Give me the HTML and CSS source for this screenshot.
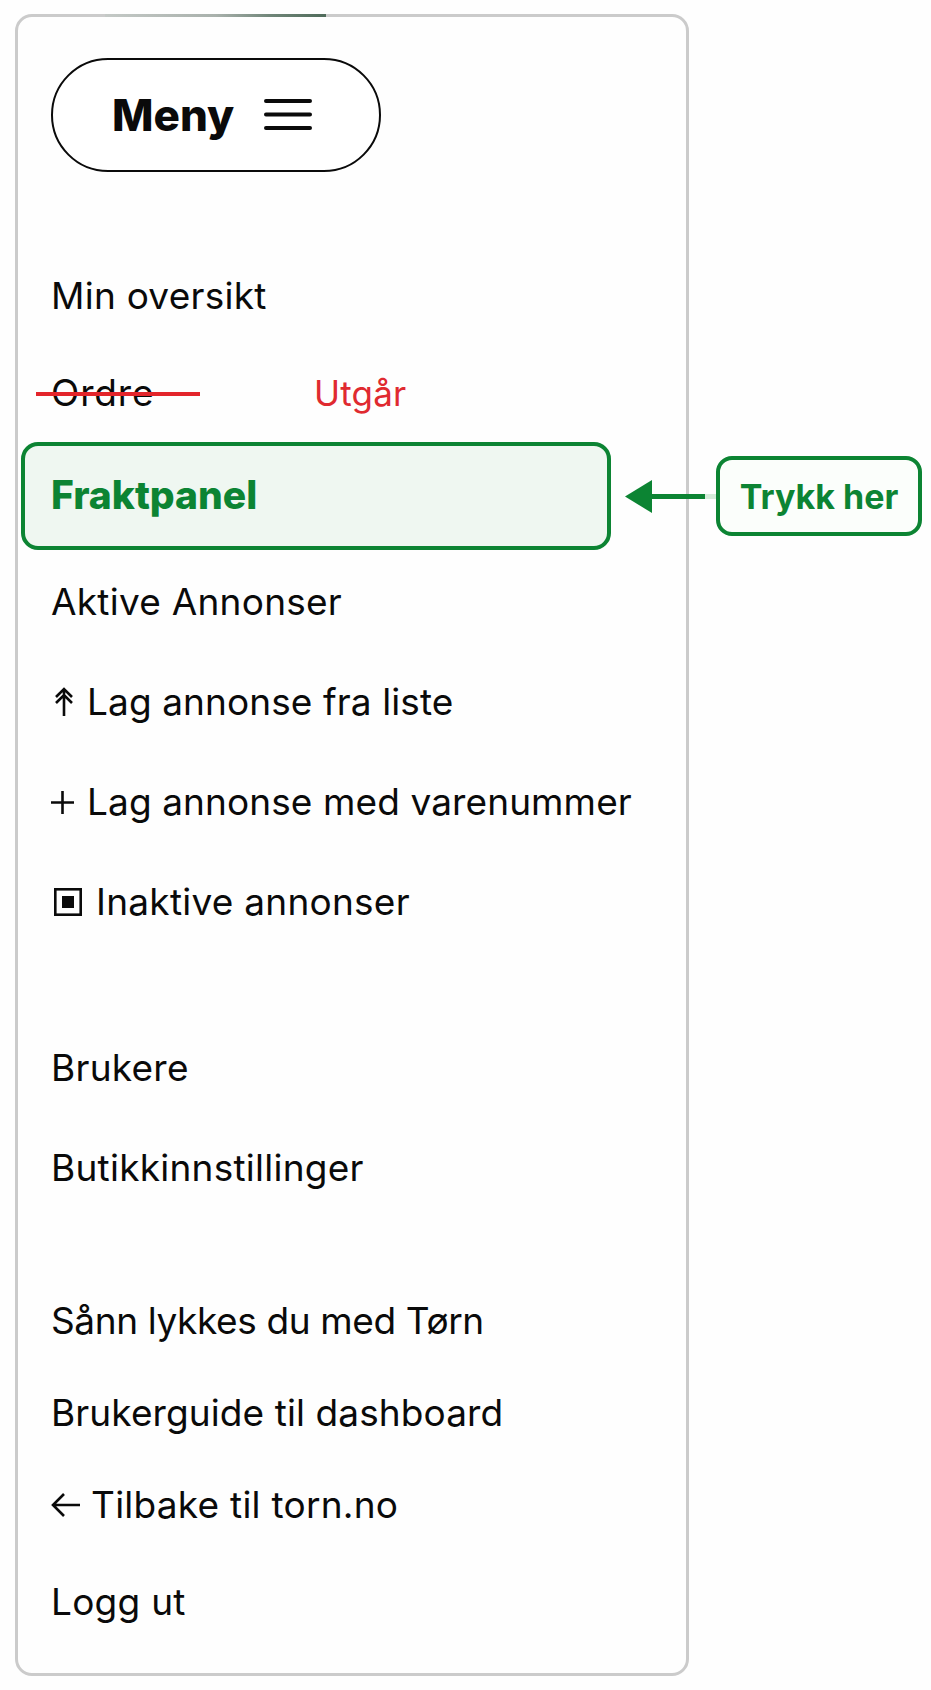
FILE: index.html
```html
<!DOCTYPE html>
<html lang="no">
<head>
<meta charset="utf-8">
<title>Meny</title>
<link rel="stylesheet" href="styles.css">
</head>
<body>
<nav class="card">
  <div class="card-top"></div>
  <button class="pill" type="button">
    <span>Meny</span>
    <svg class="burger" width="48" height="34" viewBox="0 0 48 34"><path d="M2 3h44M2 16.500h44M2 30h44" fill="none" stroke="#0a0a0a" stroke-width="4" stroke-linecap="round"/></svg>
  </button>
  <ul class="menu">
    <li class="row first">Min oversikt</li>
    <li class="row ordre"><span class="struck">Ordre</span><span class="expires">Utgår</span></li>
    <li class="highlight">Fraktpanel
      <svg class="arrow" width="96" height="36" viewBox="0 0 96 36"><path d="M0 17.500 27 1v33z" fill="#0c8433"/><path d="M26 15h54v5H26z" fill="#0c8433"/><path d="M80 15h11v5H80z" fill="#d5ecd9"/></svg>
      <span class="callout">Trykk her</span>
    </li>
    <li class="row after-highlight">Aktive Annonser</li>
    <li class="row with-icon snug"><svg class="ic ic-up" width="20" height="30" viewBox="0 0 20 30"><path d="M10 29V2M2 10l8-8 8 8M2 16l8-8 8 8" fill="none" stroke="#0a0a0a" stroke-width="2.600"/></svg>Lag annonse fra liste</li>
    <li class="row with-icon snug"><svg class="ic ic-plus" width="23" height="23" viewBox="0 0 23 23"><path d="M0 11.500h23M11.500 0v23" fill="none" stroke="#0a0a0a" stroke-width="2.600"/></svg>Lag annonse med varenummer</li>
    <li class="row with-icon"><svg class="ic ic-sq" width="28" height="28" viewBox="0 0 28 28"><rect x="1.300" y="1.300" width="25.400" height="25.400" fill="none" stroke="#0a0a0a" stroke-width="2.600"/><rect x="8" y="8" width="12" height="12" fill="#0a0a0a"/></svg>Inaktive annonser</li>
    <li class="row group-a">Brukere</li>
    <li class="row">Butikkinnstillinger</li>
    <li class="row group-b tighter">Sånn lykkes du med Tørn</li>
    <li class="row tight-a snug">Brukerguide til dashboard</li>
    <li class="row tight-b with-icon"><svg class="ic ic-back" width="29" height="26" viewBox="0 0 29 26"><path d="M29 13H2M13 2 2 13l11 11" fill="none" stroke="#0a0a0a" stroke-width="2.600"/></svg>Tilbake til torn.no</li>
    <li class="row last">Logg ut</li>
  </ul>
</nav>
</body>
</html>
```
FILE: styles.css
```css
* { box-sizing: border-box; }
html, body { margin: 0; padding: 0; }
body {
  width: 931px;
  height: 1690px;
  background: #fefefe;
  color: #0a0a0a;
  font-family: "Inter", "Liberation Sans", sans-serif;
  overflow: hidden;
}
.card {
  position: relative;
  width: 674px;
  height: 1662px;
  margin: 14px 0 0 15px;
  padding: 41px 0 0 33px;
  border: 3px solid #cbcbcb;
  border-radius: 17px;
}
.card-top {
  position: absolute;
  top: -3px;
  left: 87px;
  width: 221px;
  height: 3px;
  background: linear-gradient(90deg, #c4c9c6, #a9b1ac 50%, #6f8578 75%, #4f6b5a);
}
.pill {
  display: flex;
  align-items: center;
  width: 330px;
  height: 114px;
  padding: 0 0 0 59px;
  border: 2.500px solid #0a0a0a;
  border-radius: 57px;
  background: #fff;
  color: #0a0a0a;
  font: 800 44px/1 "Inter", "Liberation Sans", sans-serif;
}
.burger { margin-left: 30px; }
.menu { list-style: none; margin: 0; padding: 0; }
.row {
  display: flex;
  align-items: center;
  height: 60px;
  margin-top: 40px;
  font-size: 37px;
  letter-spacing: .25px;
  line-height: 60px;
  white-space: nowrap;
}
.snug { letter-spacing: .1px; }
.tighter { letter-spacing: -.38px; }
.first { margin-top: 94px; }
.ordre { margin-top: 37px; }
.struck { position: relative; width: 263px; letter-spacing: .85px; }
.struck::after {
  content: "";
  position: absolute;
  left: -15px;
  top: 29px;
  width: 164px;
  height: 4px;
  background: #e3252b;
}
.expires { color: #e02a30; font-size: 35px; letter-spacing: .2px; }
.highlight {
  position: relative;
  width: 590px;
  height: 108px;
  margin: 19px 0 0 -30px;
  padding: 19px 0 0 26px;
  border: 4px solid #0c8433;
  border-radius: 17px;
  background: #eff7f1;
  color: #0c8433;
  font-size: 39px;
  font-weight: 800;
  line-height: 60px;
}
.arrow {
  position: absolute;
  left: 600px;
  top: 33px;
}
.callout {
  position: absolute;
  left: 691px;
  top: 10px;
  width: 206px;
  height: 80px;
  border: 4px solid #0c8433;
  border-radius: 16px;
  background: #fbfefb;
  font-size: 34px;
  font-weight: 700;
  line-height: 73px;
  text-align: center;
}
.after-highlight { margin-top: 22px; }
.ic { flex: none; }
.ic-up { margin: 0 13px 0 3px; }
.ic-plus { margin: 0 13px 0 0; }
.ic-sq { margin: 0 14px 0 3px; }
.ic-back { margin: 0 11px 0 0; }
.group-a { margin-top: 106px; }
.group-b { margin-top: 93px; }
.tight-a { margin-top: 32px; }
.tight-b { margin-top: 32px; }
.last { margin-top: 37px; }
```
